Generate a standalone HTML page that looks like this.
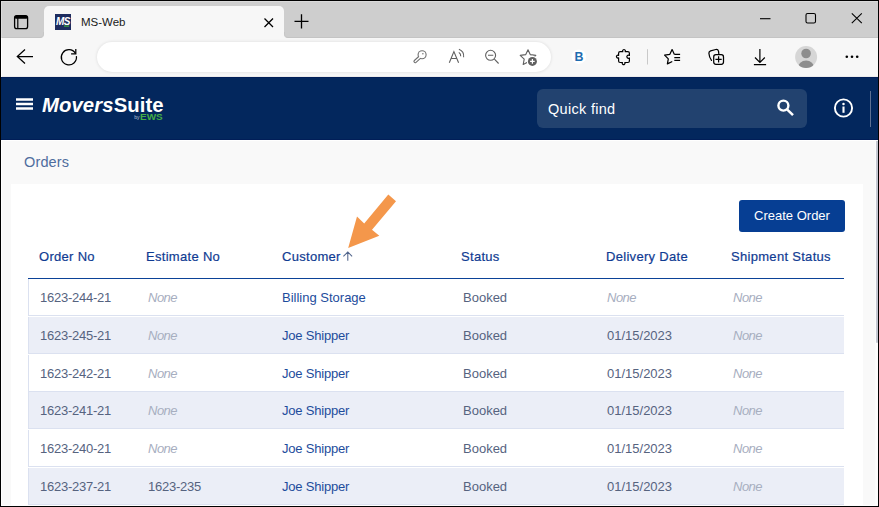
<!DOCTYPE html>
<html><head><meta charset="utf-8">
<style>
*{box-sizing:border-box;margin:0;padding:0}
html,body{width:879px;height:507px;overflow:hidden}
body{position:relative;background:#f9f9f9;font-family:"Liberation Sans",sans-serif}
.abs{position:absolute}
#tabstrip{left:0;top:0;width:879px;height:38px;background:#cecece}
#tab{left:44px;top:6px;width:240px;height:32px;background:#f7f7f7;border-radius:5px 5px 0 0}
#tabtitle{left:81px;top:14px;font-size:11.5px;color:#1a1a1a;line-height:16px}
#toolbar{left:0;top:38px;width:879px;height:39px;background:#f7f7f7}
#addr{left:97px;top:42px;width:454px;height:30px;background:#fff;border-radius:15px;box-shadow:0 0 3px 0.5px rgba(0,0,0,0.09)}
#header{left:0;top:77px;width:879px;height:63px;background:#03275d}
#search{left:537px;top:89px;width:270px;height:39px;background:#22426f;border-radius:6px}
#qf{left:548px;top:98.7px;font-size:14.5px;letter-spacing:0.3px;color:#fff;line-height:20px}
#crumb{left:24px;top:154px;font-size:14.5px;letter-spacing:0.15px;color:#4f6d9e;line-height:16px}
#card{left:11px;top:184px;width:852px;height:340px;background:#fff}
#btn{left:739px;top:200px;width:106px;height:32px;background:#063e93;border-radius:3px;color:#fff;font-size:13px;line-height:32px;text-align:center}
.th{top:249px;font-size:13px;letter-spacing:0.3px;color:#0f3b92;-webkit-text-stroke:0.2px #0f3b92;line-height:16px;white-space:nowrap}
#hline{left:28px;top:278px;width:816px;height:1px;background:#0b4297}
.row{left:28px;width:816px;height:37.8px;border-left:1px solid #dbe1f0}
.row .bd{position:absolute;left:-1px;right:0;bottom:0;height:1.8px;border-top:1px solid #dbe1f0;background:#fff}
.row.alt{background:#ebeef7}
.td{position:absolute;top:11px;font-size:13px;line-height:16px;color:#56637f;white-space:nowrap}
.num{letter-spacing:-0.25px}
.none{color:#a7aec0;font-style:italic;letter-spacing:-0.5px}
.link{color:#1d4c9c}
#frame{left:0;top:0;width:879px;height:507px;border:1px solid #000;pointer-events:none}
</style></head><body>
<div id="tabstrip" class="abs"></div>
<div id="tab" class="abs"></div>
<div class="abs" style="left:0;top:37px;width:44px;height:1px;background:#c4c4c4"></div>
<div class="abs" style="left:284px;top:37px;width:594px;height:1px;background:#c4c4c4"></div>
<div class="abs" style="left:39px;top:33px;width:5px;height:5px;background:#f7f7f7"></div><div class="abs" style="left:38px;top:32px;width:6px;height:6px;background:#cecece;border-bottom-right-radius:4px;border-right:1px solid #c6c6c6;border-bottom:1px solid #c4c4c4"></div>
<div class="abs" style="left:284px;top:33px;width:5px;height:5px;background:#f7f7f7"></div><div class="abs" style="left:284px;top:32px;width:6px;height:6px;background:#cecece;border-bottom-left-radius:4px;border-left:1px solid #c6c6c6;border-bottom:1px solid #c4c4c4"></div>
<div id="tabtitle" class="abs">MS-Web</div>
<div id="toolbar" class="abs"></div>
<div id="addr" class="abs"></div>
<div id="header" class="abs"></div>
<div id="search" class="abs"></div>
<div id="qf" class="abs">Quick find</div>
<div id="crumb" class="abs">Orders</div>
<div id="card" class="abs"></div>
<div id="btn" class="abs">Create Order</div>
<div class="th abs" style="left:39px">Order No</div>
<div class="th abs" style="left:146px">Estimate No</div>
<div class="th abs" style="left:282px">Customer</div>
<div class="th abs" style="left:461px">Status</div>
<div class="th abs" style="left:606px">Delivery Date</div>
<div class="th abs" style="left:731px">Shipment Status</div>
<div id="hline" class="abs"></div>

<div class="row abs" style="top:279px"><div class="bd"></div>
<div class="td num" style="left:11px">1623-244-21</div><div class="td none" style="left:119px">None</div><div class="td link" style="left:253px">Billing Storage</div><div class="td" style="left:434px">Booked</div><div class="td none" style="left:578px">None</div><div class="td none" style="left:704px">None</div></div>
<div class="row abs alt" style="top:316.8px"><div class="bd"></div>
<div class="td num" style="left:11px">1623-245-21</div><div class="td none" style="left:119px">None</div><div class="td link" style="left:253px;letter-spacing:-0.2px">Joe Shipper</div><div class="td" style="left:434px">Booked</div><div class="td" style="left:578px">01/15/2023</div><div class="td none" style="left:704px">None</div></div>
<div class="row abs" style="top:354.6px"><div class="bd"></div>
<div class="td num" style="left:11px">1623-242-21</div><div class="td none" style="left:119px">None</div><div class="td link" style="left:253px;letter-spacing:-0.2px">Joe Shipper</div><div class="td" style="left:434px">Booked</div><div class="td" style="left:578px">01/15/2023</div><div class="td none" style="left:704px">None</div></div>
<div class="row abs alt" style="top:392.4px"><div class="bd"></div>
<div class="td num" style="left:11px">1623-241-21</div><div class="td none" style="left:119px">None</div><div class="td link" style="left:253px;letter-spacing:-0.2px">Joe Shipper</div><div class="td" style="left:434px">Booked</div><div class="td" style="left:578px">01/15/2023</div><div class="td none" style="left:704px">None</div></div>
<div class="row abs" style="top:430.2px"><div class="bd"></div>
<div class="td num" style="left:11px">1623-240-21</div><div class="td none" style="left:119px">None</div><div class="td link" style="left:253px;letter-spacing:-0.2px">Joe Shipper</div><div class="td" style="left:434px">Booked</div><div class="td" style="left:578px">01/15/2023</div><div class="td none" style="left:704px">None</div></div>
<div class="row abs alt" style="top:468px"><div class="bd"></div>
<div class="td num" style="left:11px">1623-237-21</div><div class="td num" style="left:119px">1623-235</div><div class="td link" style="left:253px;letter-spacing:-0.2px">Joe Shipper</div><div class="td" style="left:434px">Booked</div><div class="td" style="left:578px">01/15/2023</div><div class="td none" style="left:704px">None</div></div>

<svg class="abs" style="left:0;top:0" width="879" height="140" viewBox="0 0 879 140">
<!-- tab actions -->
<rect x="14.6" y="15.6" width="13" height="13" rx="2.2" fill="none" stroke="#000" stroke-width="1.3"/>
<rect x="14.6" y="15.6" width="13" height="3.2" rx="1.5" fill="#000"/>
<line x1="17.8" y1="18" x2="17.8" y2="28.5" stroke="#000" stroke-width="1.2"/>
<!-- favicon -->
<rect x="55" y="14" width="16" height="16" fill="#1d2c5f"/>
<text x="56" y="24.6" font-family="Liberation Sans" font-weight="bold" font-style="italic" font-size="10" fill="#fff" letter-spacing="-0.6">MS</text>
<rect x="64" y="25.5" width="5" height="1.2" fill="#3da53a"/>
<!-- tab close -->
<path d="M264.5 18.5 L273 27 M273 18.5 L264.5 27" stroke="#000" stroke-width="1.3"/>
<!-- new tab plus -->
<path d="M301.5 14.3 V28.5 M294.5 21.4 H308.5" stroke="#000" stroke-width="1.3"/>
<!-- window controls -->
<path d="M760 18.7 H770.5" stroke="#000" stroke-width="1.1"/>
<rect x="806" y="13.5" width="9.5" height="9.5" rx="1.6" fill="none" stroke="#000" stroke-width="1.1"/>
<path d="M851.8 13.4 L861.8 23.2 M861.8 13.4 L851.8 23.2" stroke="#000" stroke-width="1.1"/>
<!-- back -->
<path d="M17.3 56.5 H33 M25 49.5 L17.3 56.5 L25 63.5" fill="none" stroke="#000" stroke-width="1.25"/>
<!-- reload -->
<path d="M76.4 56.2 A7.6 7.6 0 1 1 75.4 53.4" fill="none" stroke="#000" stroke-width="1.25"/>
<path d="M75.8 49 V53.8 H71.1" fill="none" stroke="#000" stroke-width="1.25"/>
<!-- key -->
<circle cx="422.1" cy="54.7" r="4.55" fill="#707070"/>
<path d="M421 56.2 L415.2 61.4" stroke="#707070" stroke-width="3.6" stroke-linecap="round"/>
<circle cx="422.1" cy="54.7" r="3.45" fill="#fff"/>
<path d="M419.6 57.5 L415.2 61.4" stroke="#fff" stroke-width="1.4" stroke-linecap="round"/>
<circle cx="422.9" cy="53.7" r="0.75" fill="#707070"/>
<!-- read aloud -->
<path d="M449.3 62.7 L453.9 51.6 L458.6 62.7 M450.9 58.5 H457" fill="none" stroke="#606060" stroke-width="1.1"/>
<path d="M458.8 52.4 A4 4 0 0 1 460.7 56.2 M458.9 49.3 A7.5 7.5 0 0 1 463.6 57.3" fill="none" stroke="#606060" stroke-width="1.1"/>
<!-- zoom out -->
<circle cx="490.6" cy="55.3" r="5" fill="none" stroke="#606060" stroke-width="1.1"/>
<path d="M488 55.3 H493.3 M494.4 59.2 L498.6 63.5" stroke="#606060" stroke-width="1.1"/>
<!-- star add -->
<path d="M528.00 49.70 L530.35 54.66 L535.80 55.37 L531.80 59.14 L532.82 64.53 L528.00 61.90 L523.18 64.53 L524.20 59.14 L520.20 55.37 L525.65 54.66 Z" fill="none" stroke="#606060" stroke-width="1.1" stroke-linejoin="round"/>
<circle cx="532.4" cy="61.4" r="5.6" fill="#fff"/>
<circle cx="532.4" cy="61.4" r="4.5" fill="#606060"/>
<path d="M532.4 59.1 V63.7 M530.1 61.4 H534.7" stroke="#fff" stroke-width="1.2"/>
<!-- B -->
<circle cx="578.8" cy="56.7" r="7.3" fill="#fff"/>
<text x="574.6" y="61.1" font-family="Liberation Sans" font-weight="bold" font-size="12.4" fill="#1f6db0">B</text>
<!-- puzzle -->
<path d="M620.1 51.7 H622.8 A1.4 1.4 0 1 1 625.2 51.7 H627.9 Q629.4 51.7 629.4 53.2 V55.4 A1.6 1.6 0 1 0 629.4 58 V61 Q629.4 62.5 627.9 62.5 H624.8 A1.4 1.4 0 1 1 622.4 62.5 H620.1 Q618.6 62.5 618.6 61 V57.8 A1.4 1.4 0 1 1 618.6 55.4 V53.2 Q618.6 51.7 620.1 51.7 Z" fill="none" stroke="#000" stroke-width="1.2" stroke-linejoin="round"/>
<!-- separator -->
<path d="M647.5 49.2 V64.5" stroke="#c9c9c9" stroke-width="1"/>
<!-- favorites -->
<path d="M674.3 54.2 L672.1 49.6 L669.85 54.3 L664.6 55.1 L668.3 58.9 L667.4 63.9 L671.8 61.7" fill="none" stroke="#000" stroke-width="1.25" stroke-linejoin="round" stroke-linecap="round"/>
<path d="M674.6 54.35 H680.1 M674.3 57.5 H680.1 M674.3 60.35 H680.1" stroke="#000" stroke-width="1.25"/>
<!-- collections -->
<path d="M711.5 60.4 Q709.2 57.5 708.9 53.2 Q708.7 51.4 710.6 50.8 L715.8 49.5 Q717.9 49.1 718.5 51.1 L718.8 53.8" fill="none" stroke="#000" stroke-width="1.25" stroke-linejoin="round" stroke-linecap="round"/>
<rect x="713.7" y="54.7" width="9.8" height="9.6" rx="2.2" fill="#f7f7f7" stroke="#000" stroke-width="1.25"/>
<path d="M718.6 56.3 V62.6 M715.4 59.45 H721.7" stroke="#000" stroke-width="1.25"/>
<!-- download -->
<path d="M759.9 49.1 V62.2 M755 57.5 L759.9 62.4 L764.8 57.5 M753.9 64.6 H766.1" fill="none" stroke="#000" stroke-width="1.2"/>
<!-- avatar -->
<circle cx="806.1" cy="57" r="11" fill="#d6d6d6"/>
<clipPath id="av"><circle cx="806.1" cy="57" r="11"/></clipPath>
<circle cx="806.1" cy="53.5" r="4.8" fill="#8d8d8d"/>
<ellipse cx="806.1" cy="68.5" rx="8.2" ry="8" fill="#8d8d8d" clip-path="url(#av)"/>
<!-- more -->
<circle cx="846.8" cy="56.8" r="1.3" fill="#000"/><circle cx="852" cy="56.8" r="1.3" fill="#000"/><circle cx="857.2" cy="56.8" r="1.3" fill="#000"/>
<!-- hamburger -->
<path d="M16 99.4 H33 M16 104 H33 M16 108.5 H33" stroke="#fff" stroke-width="2.5"/>
<!-- search -->
<circle cx="783.4" cy="105.6" r="5" fill="none" stroke="#fff" stroke-width="2.4"/>
<path d="M787.3 109.6 L793 115.2" stroke="#fff" stroke-width="2.5"/>
<!-- info -->
<circle cx="843.5" cy="108" r="8.6" fill="none" stroke="#fff" stroke-width="1.9"/>
<circle cx="843.5" cy="104" r="1.25" fill="#fff"/>
<path d="M843.5 106.5 V112.8" stroke="#fff" stroke-width="2.1"/>
<path d="M870.5 91 V127" stroke="#5d7093" stroke-width="1"/>
</svg>
<div class="abs" id="logo" style="left:42px;top:93px;font-weight:bold;font-size:20.3px;color:#fff;line-height:24px;white-space:nowrap;letter-spacing:0.1px"><i>Movers</i>Suite</div>
<div class="abs" style="left:134.3px;top:113.5px;font-size:5px;color:#b9c4d8;line-height:7px">by</div>
<div class="abs" style="left:140px;top:112.9px;font-size:8.3px;font-weight:bold;color:#43ad46;line-height:8px;transform:scaleX(1.2);transform-origin:0 0">EWS</div>
<svg class="abs" style="left:0;top:0" width="879" height="507" viewBox="0 0 879 507">
<path d="M343.4 256.3 L347.8 252 L352.1 256.3 M347.8 252.2 V260.8" fill="none" stroke="#51658c" stroke-width="1.05"/>
<path d="M348.2 248 L357 216.6 L364.2 223.4 L388.3 194.6 L396 201.2 L372 229.8 L379.3 235.7 Z" fill="#f4974b"/>
</svg>
<div class="abs" style="left:875px;top:140px;width:1px;height:367px;background:#fdfdfd"></div>
<div class="abs" style="left:876px;top:343px;width:2px;height:162px;background:#fdfdfd"></div>
<div class="abs" style="left:876px;top:141px;width:2px;height:202px;background:#c3c7d1;border-radius:0 0 1px 1px"></div>
<div class="abs" style="left:0;top:76px;width:879px;height:1px;background:#ebebeb"></div>
<div class="abs" style="left:0;top:77px;width:879px;height:1px;background:#011e58"></div>
<div class="abs" style="left:0;top:139px;width:879px;height:1px;background:#011e58"></div>
<div class="abs" style="left:0;top:140px;width:875px;height:1px;background:#fff"></div>
<div class="abs" style="left:1px;top:1px;width:877px;height:1px;background:#dadada"></div>
<div class="abs" style="left:1px;top:1px;width:1px;height:37px;background:#dadada"></div>
<div class="abs" style="left:1px;top:38px;width:1px;height:39px;background:#fff"></div>
<div class="abs" style="left:1px;top:140px;width:1px;height:367px;background:#fff"></div>
<div class="abs" style="left:0;top:505px;width:875px;height:1px;background:#fff"></div>
<div id="frame" class="abs"></div>
</body></html>
